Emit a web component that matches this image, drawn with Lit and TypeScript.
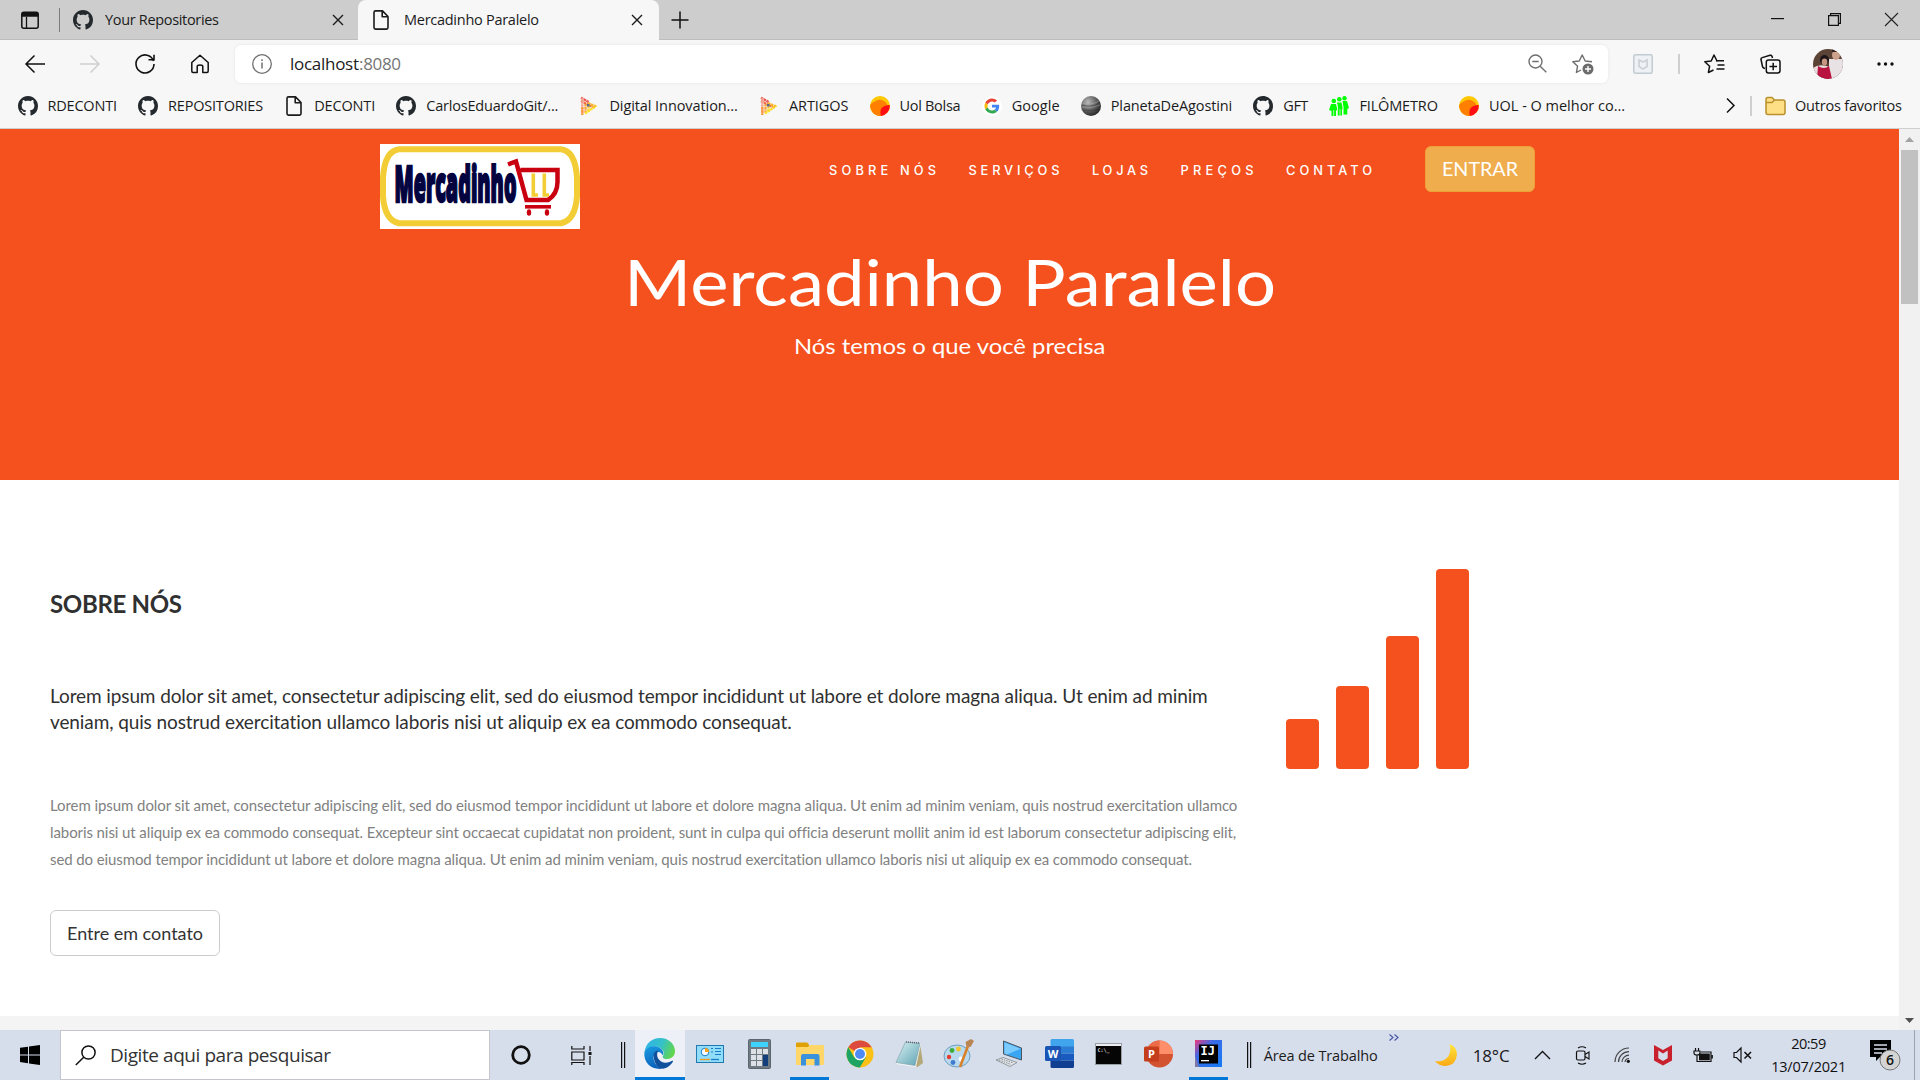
import { LitElement, html, css, svg } from "lit";
import { customElement } from "lit/decorators.js";
import { styleMap } from "lit/directives/style-map.js";

const UI = '"Open Sans"';
const BODY = "Lato";
const ctx = document.createElement("canvas").getContext("2d")!;

/** Text set to an exact run width by tracking it from its measured advance. */
const fit = (text: string, width: number, size: number, family = UI, weight = 400) => {
  ctx.font = `${weight} ${size}px ${family}`;
  const ls = (width - ctx.measureText(text).width) / (text.length - 1);
  return html`<span class="fit" style=${styleMap({
    width: `${width}px`, letterSpacing: `${ls.toFixed(3)}px`, fontSize: `${size}px`, fontFamily: `${family}, sans-serif`, fontWeight: `${weight}`,
  })}>${text}</span>`;
};

/** Text widened horizontally to a run width. */
const stretch = (text: string, width: number, size: number, family = BODY, weight = 400) => {
  ctx.font = `${weight} ${size}px ${family}`;
  const k = width / ctx.measureText(text).width;
  return html`<span class="stretch" style=${styleMap({ width: `${width}px`, fontSize: `${size}px`, fontFamily: `${family}, sans-serif`, fontWeight: `${weight}` })}
    ><span class="stretch-in" style=${styleMap({ transform: `scaleX(${k.toFixed(4)})` })}>${text}</span></span>`;
};

const icon = (w: number, h: number, body: unknown, box = `0 0 ${w} ${h}`) =>
  html`<svg class="ic" width=${w} height=${h} viewBox=${box} preserveAspectRatio="none" fill="none">${body}</svg>`;

const github = icon(20, 20, svg`<path fill="#24292e" d="M8 0C3.58 0 0 3.58 0 8c0 3.54 2.29 6.53 5.47 7.59.4.07.55-.17.55-.38 0-.19-.01-.82-.01-1.49-2.01.37-2.53-.49-2.69-.94-.09-.23-.48-.94-.82-1.13-.28-.15-.68-.52-.01-.53.63-.01 1.08.58 1.23.82.72 1.21 1.87.87 2.33.66.07-.52.28-.87.51-1.07-1.78-.2-3.64-.89-3.64-3.95 0-.87.31-1.59.82-2.15-.08-.2-.36-1.02.08-2.12 0 0 .67-.21 2.2.82.64-.18 1.32-.27 2-.27s1.36.09 2 .27c1.53-1.04 2.2-.82 2.2-.82.44 1.1.16 1.92.08 2.12.51.56.82 1.27.82 2.15 0 3.07-1.87 3.75-3.65 3.95.29.25.54.73.54 1.48 0 1.07-.01 1.93-.01 2.2 0 .21.15.46.55.38A8.01 8.01 0 0 0 16 8c0-4.42-3.58-8-8-8z"/>`, "0 0 16 16");
const page = icon(20, 20, svg`<path stroke="#1b1b1b" stroke-width="1.6" stroke-linejoin="round" d="M4.5 .9H11.5L17 6.500V17.500Q17 19.100 15.500 19.100H4.500Q3 19.100 3 17.500V2.400Q3 .9 4.500 .9ZM11.200 1V6.800H17"/>`);
const dio = icon(20, 20, svg`
  <g stroke-width="2.300" stroke-dasharray="2.600 .5">
    <path stroke="#f0524f" d="M2 1.700L10 6.200"/><path stroke="#ef7048" d="M2 5L15.500 12"/>
    <path stroke="#f2a08c" d="M3.300 2V18"/><path stroke="#fb9a3c" d="M3.300 11V19"/>
    <path stroke="#f6a13a" d="M6.500 8V17"/><path stroke="#f9c62c" d="M9.500 10V16"/>
    <path stroke="#fde02d" d="M6 17.500L17.500 9.500"/><path stroke="#f9b52c" d="M9 7L16.500 10.500"/>
  </g><rect x="8" y="8" width="2.500" height="2.500" fill="#5a6b8c"/>`);
const uol = icon(20, 20, svg`<circle cx="10" cy="10" r="10" fill="#ffc800"/><path fill="#ff8000" d="M2 15.500A8 8 0 1 1 17.500 9L12 19.800A10 10 0 0 1 2 15.500Z"/><path fill="#ff8000" d="M0 10Q1 6 6 5.500L8 18Q1 17 0 10Z"/><path fill="#ff0f14" d="M19.800 9A10 10 0 0 1 11 19.900Q9 13 13.500 10.500Q17 8.500 19.800 9Z"/>`);
const google = icon(20, 20, svg`<circle cx="24" cy="24" r="24" fill="#fff"/><g transform="translate(6 6) scale(.75)">
  <path fill="#EA4335" d="M24 9.500c3.540 0 6.710 1.220 9.210 3.600l6.850-6.850C35.900 2.380 30.470 0 24 0 14.620 0 6.510 5.380 2.560 13.220l7.980 6.190C12.430 13.720 17.740 9.500 24 9.500z"/>
  <path fill="#4285F4" d="M46.980 24.550c0-1.570-.15-3.090-.38-4.550H24v9.020h12.940c-.58 2.960-2.260 5.480-4.780 7.180l7.730 6c4.510-4.180 7.090-10.360 7.090-17.650z"/>
  <path fill="#FBBC05" d="M10.530 28.590c-.48-1.450-.76-2.990-.76-4.590s.27-3.140.76-4.590l-7.980-6.190C.92 16.460 0 20.120 0 24c0 3.880.92 7.540 2.560 10.780l7.970-6.190z"/>
  <path fill="#34A853" d="M24 48c6.480 0 11.930-2.130 15.890-5.810l-7.730-6c-2.150 1.450-4.920 2.300-8.160 2.300-6.260 0-11.570-4.220-13.470-9.910l-7.980 6.190C6.510 42.620 14.620 48 24 48z"/></g>`, "0 0 48 48");
const planet = icon(20, 20, svg`<defs><radialGradient id="pl" cx=".35" cy=".3" r=".8"><stop offset="0" stop-color="#b9b9b9"/><stop offset=".45" stop-color="#6c6c6c"/><stop offset="1" stop-color="#1a1a1a"/></radialGradient></defs>
  <circle cx="10" cy="10" r="10" fill="url(#pl)"/><path stroke="#c4c4c4" stroke-opacity=".35" d="M1.500 7Q9 10 18 5M1 11Q10 13 19 9"/><path stroke="#222" stroke-opacity=".4" d="M1 9Q10 12 19 7M2 14Q10 16 18 13"/>`);
const people = icon(20, 20, svg`<g fill="#0f0"><circle cx="4.800" cy="5" r="2.300"/><circle cx="10.300" cy="3.200" r="2.300"/><circle cx="15.500" cy="2.200" r="2.200"/>
  <path d="M2 8H7L8.500 14L7 14.500V20H2.500V15L0 14Z"/><path d="M8 6.500H12.500L14 12L13 13V19.500H8.800V13Z"/><path d="M13.500 5H18L20 12L18.300 13V18.500H14.500V12Z"/></g><path stroke="#f7f7f7" stroke-width=".7" d="M4.700 14V20M11 13V19.500M8 8L8.800 14M13.200 6.500L14 12"/>`);
const folder = icon(21, 20, svg`<path fill="#ffdf85" stroke="#b8902c" stroke-width="1.500" d="M1 3.500Q1 1.500 3 1.500H7L9.500 4H18Q20 4 20 6V16.500Q20 18.500 18 18.500H3Q1 18.500 1 16.500Z"/><path stroke="#b8902c" stroke-width="1.500" d="M1 6.500H7L9.500 4"/>`);
const x12 = icon(12, 12, svg`<path stroke="#1b1b1b" stroke-width="1.400" d="M1 1L11 11M11 1L1 11"/>`);

const bookmarks: [unknown, string, number][] = [
  [github, "RDECONTI", 69.5], [github, "REPOSITORIES", 95], [page, "DECONTI", 61], [github, "CarlosEduardoGit/...", 132],
  [dio, "Digital Innovation...", 128.5], [dio, "ARTIGOS", 59.5], [uol, "Uol Bolsa", 61], [google, "Google", 48],
  [planet, "PlanetaDeAgostini", 121.5], [github, "GFT", 25], [people, "FILÔMETRO", 78.5], [uol, "UOL - O melhor co...", 136],
];
const menu: [string, number][] = [["SOBRE NÓS", 107], ["SERVIÇOS", 91], ["LOJAS", 56], ["PREÇOS", 73], ["CONTATO", 86]];

const avatar = icon(30, 30, svg`<defs><clipPath id="av"><circle cx="15" cy="15" r="15"/></clipPath></defs><g clip-path="url(#av)">
  <rect width="30" height="30" fill="#5b4436"/><rect x="16" y="10" width="14" height="20" fill="#e9e2e4"/><ellipse cx="23" cy="6" rx="4" ry="5" fill="#cda28c"/><path fill="#31221f" d="M19 0H28V3H19Z"/>
  <path fill="#e8dcdc" d="M0 19Q6 14 17 18L18 26H0Z"/><path fill="#b9133f" d="M5 17Q11 21 16 17L19 30H4Z"/><ellipse cx="11.500" cy="11" rx="4.500" ry="5" fill="#1c1416"/><ellipse cx="11.500" cy="13" rx="2.800" ry="3.400" fill="#c79683"/></g>`);

const apps: [unknown, string][] = [
  [icon(31, 31, svg`<defs><linearGradient id="e1" x1="0" x2="1" y1=".2" y2=".5"><stop offset="0" stop-color="#2fb4e8"/><stop offset=".55" stop-color="#35c1c8"/><stop offset="1" stop-color="#62d64c"/></linearGradient><linearGradient id="e2" x1="0" x2=".3" y1="0" y2="1"><stop offset="0" stop-color="#1b9de2"/><stop offset="1" stop-color="#0a63bd"/></linearGradient></defs>
    <path fill="url(#e1)" d="M.5 14C1.500 5.500 8 0 16 0C25 0 31 6.500 31 13C31 18.500 27 21 22.500 21C19.500 21 18 19.500 19 18C21.500 14 17.500 8.500 11 8.500C6 8.500 2 11 .5 14Z"/>
    <path fill="url(#e2)" d="M.4 14C2.500 9.500 7 7.800 11.500 8.300C17 9 20.500 13.500 19 17.500C16 12 10 13.500 9.500 19C9.300 25 14 30 19 30.600C8 32.500-.8 25 .4 14Z"/>
    <path fill="#104f9c" d="M9.600 18C9.300 15 12 12.500 14.500 12.600C11 17 14.500 24.500 21 24.700C24.500 24.800 27 23.500 28.300 22.800C29 22.500 29.300 23 29 23.600C26.500 28 22 31 18 30.600C13 30 9.800 24 9.600 18Z"/>`), "active run"],
  [icon(28, 18, svg`<rect x=".5" y=".5" width="27" height="17" fill="#8fdcfb" stroke="#2378b0"/><circle cx="9" cy="7" r="3.800" fill="#f7fbff" stroke="#1b7cc5"/><path fill="#f6a21b" d="M9 3V7H13A4 4 0 0 0 9 3Z"/><path stroke="#1b7cc5" stroke-width="1.200" d="M15 3.500H17M19 3.500H25M19 6.500H25M19 9.500H25M15 7H17"/><path stroke="#f39a16" stroke-width="1.300" d="M4 14.500H14"/><path stroke="#1b7cc5" stroke-width="1.300" d="M15 14.500H23"/>`), ""],
  [icon(23, 30, svg`<rect x=".5" y=".5" width="22" height="29" rx="1" fill="#6f7a83" stroke="#5c666f"/><rect x="3" y="3" width="17" height="5" fill="#3fd3fb"/><g fill="#dde0e4"><path d="M3 10h5v5H3zM9 10h5v5H9zM15 10h5v5H15zM3 16h5v5H3zM9 16h5v5H9zM3 22h5v5H3zM9 22h5v5H9z"/></g><rect x="15" y="16" width="5" height="11" fill="#123f7c"/>`), ""],
  [icon(28, 24, svg`<path fill="#e0a106" d="M0 1.500Q0 .5 1 .5H11L13 2.500V6H0Z"/><path fill="#ffd769" d="M0 5H12L14 3H27Q28 3 28 4V22Q28 23 27 23H0Z"/><path fill="#3a92dc" d="M5 14Q5 12 7 12H21.500Q23.500 12 23.500 14V23.500H18.500V17H10V23.500H5Z"/>`), "run"],
  [icon(28, 28, svg`<circle cx="14" cy="14" r="13.500" fill="#fbc116"/><path fill="#dd4b3e" d="M14 14L2.300 7.200A13.500 13.500 0 0 1 25.700 7.300H14Z"/><path fill="#1da462" d="M2.300 7.200A13.500 13.500 0 0 0 13.800 27.500L19.800 17.500L14 14L8.200 17.400Z"/><circle cx="14" cy="14" r="6.300" fill="#fff"/><circle cx="14" cy="14" r="5" fill="#4c8bf5"/>`), ""],
  [icon(28, 26, svg`<defs><linearGradient id="np" x1="0" x2="1" y1="0" y2="1"><stop offset="0" stop-color="#d8f1f3"/><stop offset="1" stop-color="#5fa3b3"/></linearGradient></defs><path fill="#b5a878" d="M25 3L28 22L22.500 26L19 25Z"/><path fill="#f4f7f8" d="M1 23L11 1L26 2.500L21 26Z"/><path fill="url(#np)" stroke="#7c9ba3" stroke-width=".6" d="M1 21.500L10.500 1L25 2.500L20 24.500Z"/><path stroke="#5b6b70" stroke-width="1.500" stroke-dasharray="1 1" d="M11 1L25 2"/>`), ""],
  [icon(30, 29, svg`<ellipse cx="13" cy="17" rx="13" ry="11" fill="#b9d9ee" stroke="#6d9fbe"/><circle cx="5" cy="18" r="2.200" fill="#e33b2e"/><circle cx="8" cy="11.500" r="2.400" fill="#3cad3c"/><circle cx="14.500" cy="10" r="2.400" fill="#f6c42c"/><circle cx="9" cy="23.500" r="2.400" fill="#3f7bd0"/><circle cx="17" cy="20" r="2.400" fill="#fff"/><path stroke="#d9812a" stroke-width="2.600" d="M24 7L16 28"/><path fill="#b98552" d="M21.500 3L27 0L30 2L26.500 8L22.500 7.500Z"/>`), ""],
  [icon(28, 27, svg`<path fill="#3ba7f3" stroke="#4b5560" d="M8.500 1L26.500 8L26.500 20L8.500 14Z"/><path fill="#7ccbff" d="M9.500 2.500L25.500 8.800L12 14.500L9.500 13.500Z"/><path fill="#e5e8ea" stroke="#7d868e" stroke-width=".8" d="M1 20L8 17.500L22 22.500L15 26.500Z"/><path stroke="#7d868e" stroke-dasharray="1.500 1" d="M4 20L16 24.500M6.500 19L18.500 23"/>`), ""],
  [icon(29, 29, svg`<path fill="#41a5ee" d="M7 0H27.500Q29 0 29 1.500V8H5.500V1.500Q5.500 0 7 0Z"/><path fill="#2b7cd3" d="M5.500 7.500H29V14.500H5.500Z"/><path fill="#185abd" d="M5.500 14.500H29V21.500H5.500Z"/><path fill="#103f91" d="M5.500 21.500H29V27.500Q29 29 27.500 29H7Q5.500 29 5.500 27.500Z"/><rect y="7" width="16" height="15" rx="1.500" fill="#1a55b5"/><text x="8" y="18.500" text-anchor="middle" class="glyph" fill="#fff">W</text>`), ""],
  [icon(27, 22, svg`<rect x=".5" y=".5" width="26" height="21" fill="#050505" stroke="#9aa0a6"/><rect x="1" y="1" width="25" height="2" fill="#eceff1"/><text x="2.500" y="9" class="prompt" fill="#ddd">C:\\_</text>`), ""],
  [icon(29, 28, svg`<circle cx="15.500" cy="14" r="13.500" fill="#d35230"/><path fill="#ed6c47" d="M15.500 .5V14H2A13.500 13.500 0 0 1 15.500 .5Z"/><path fill="#ff8f6b" d="M15.500 .5A13.500 13.500 0 0 1 29 14H15.500Z"/><rect y="6.500" width="15" height="15" rx="1.500" fill="#c43e1c"/><text x="7.500" y="18" text-anchor="middle" class="glyph" fill="#fff">P</text>`), ""],
  [icon(27, 27, svg`<defs><linearGradient id="ij" x1="0" y1="0" x2="1" y2="1"><stop offset="0" stop-color="#f03878"/><stop offset=".35" stop-color="#3d6be8"/><stop offset="1" stop-color="#147bf5"/></linearGradient></defs><rect width="27" height="27" fill="url(#ij)"/><path fill="#fe8b2c" d="M0 16L4 27H0Z" opacity=".35"/><rect x="4" y="4.500" width="19" height="19" fill="#000"/><text x="5.500" y="15" class="ij" fill="#fff">IJ</text><rect x="6" y="20" width="8" height="1.300" fill="#fff"/>`), "run"],
];

const tray = [
  icon(17, 10, svg`<path stroke="#111" stroke-width="1.300" d="M1 9L8.500 1.500L16 9"/>`),
  icon(16, 19, svg`<path stroke="#111" stroke-width="1.200" d="M3 2Q7 -.5 11 2M3 17Q7 19.500 11 17"/><rect x="1.500" y="5" width="8.500" height="9" rx="1.500" stroke="#111" stroke-width="1.200"/><path stroke="#111" stroke-width="1.100" d="M10 8.500L14 6V13L10 10.500"/>`),
  icon(17, 16, svg`<g stroke="#444" stroke-width="1.200"><path d="M1 15A14 14 0 0 1 15 1"/><path d="M4.500 15A10.500 10.500 0 0 1 15 4.600"/><path d="M8 15A7 7 0 0 1 15 8.200"/><path d="M11 15A4 4 0 0 1 15 11.500"/></g><circle cx="14.300" cy="14.300" r="1.600" fill="#111"/>`),
  icon(20, 21, svg`<path fill="#c8202d" d="M1 0L10 5L19 0V15.500L10 20.500L1 15.500ZM5.300 5.500V13.200L10 15.900L14.700 13.200V5.500L10 8.500Z" fill-rule="evenodd"/>`),
  icon(20, 15, svg`<path stroke="#111" stroke-width="1.200" d="M2.500 0V3M5.500 0V3M1 3H7V5Q7 7 4 7Q1 7 1 5ZM4 7V13.500H18V4H8M19.300 7V10.500"/><path fill="#111" d="M6 5.500H16.800V12.300H6Z"/>`),
  icon(20, 16, svg`<path stroke="#111" stroke-width="1.200" d="M1 5.500H3.500L8 1V15L3.500 10.500H1Z"/><path stroke="#111" stroke-width="1.500" d="M11.500 5L18 11.500M18 5L11.500 11.500"/>`),
];

@customElement("app-root")
export class AppRoot extends LitElement {
  static styles = css`
    :host { display: block; width: 1920px; height: 1080px; overflow: hidden; background: #fff; color: #1b1b1b; font-family: "Open Sans", sans-serif; }
    * { box-sizing: border-box; }
    .ic { display: block; flex: none; overflow: visible; }
    .fit { display: inline-block; flex: none; white-space: nowrap; }
    .stretch { display: inline-block; flex: none; white-space: nowrap; text-align: left; }
    .stretch-in { display: inline-block; transform-origin: 0 50%; }
    .row { display: flex; align-items: center; }
    .cell { display: flex; align-items: center; justify-content: center; flex: none; }
    .grow { flex: 1; }

    .tabs { height: 40px; background: #cdcdcd; display: flex; align-items: stretch; box-shadow: inset 0 -1px #bdbdbd; }
    .tab { display: flex; align-items: center; height: 40px; line-height: 20px; }
    .tab.first { width: 298px; padding: 0 14px 0 13px; gap: 12px; }
    .tab.on { width: 301px; padding: 0 16px 0 13px; gap: 13px; background: #f7f7f7; border-radius: 8px 8px 0 0; }
    .tabmenu { width: 59px; padding-left: 1px; }
    .vbar { width: 1px; height: 24px; background: #7c7c7c; align-self: center; }
    .wc { width: 57px; height: 38px; }
    .plus { width: 42px; }

    .tools { height: 46px; background: #f7f7f7; padding-top: 1px; }
    .tools .cell { width: 55px; height: 44px; }
    .tools .w-back { width: 62px; }
    .tools .w-shield { width: 70px; }
    .tools .w-fav { width: 72px; padding-right: 3px; }
    .tools .w-coll { width: 36px; }
    .tools .w-face { width: 80px; }
    .tools .w-dots { width: 34px; margin-right: 18px; }
    .address { width: 1373px; height: 38px; background: #fff; border-radius: 6px; box-shadow: 0 0 3px #e3e3e3; padding: 0 14px 0 17px; }
    .address .host { margin-left: 18px; line-height: 24px; }
    .address .zoom { margin-right: 25px; }
    .dim { color: #767676; }
    .marks { height: 43px; background: #f7f7f7; border-bottom: 1px solid #cfcfcf; padding: 0 18px 3px 17.500px; gap: 21.100px; line-height: 20px; }
    .mark { display: flex; align-items: center; gap: 10px; flex: none; }
    .mark .slot { width: 20px; display: flex; justify-content: center; }
    .others { gap: 9px; }
    .others .sep { margin: 0 4px 0 6px; }
    .sep { width: 2px; height: 20px; background: #cfcfcf; }

    .view { display: flex; height: 901px; }
    .site { width: 1899px; display: flex; flex-direction: column; }
    .hero { height: 351px; background: #f4511e; color: #fff; padding-top: 15px; display: flex; flex-direction: column; }
    .top { display: flex; align-items: flex-start; padding-left: 380px; height: 85px; }
    .menu { display: flex; margin-left: 249px; gap: 32.500px; padding-top: 15px; line-height: 24px; }
    .enter { margin-left: 53px; margin-top: 2px; width: 110px; height: 46px; background: #f0ad4e; border: 1px solid #eea236; border-radius: 6px; line-height: 44px; padding-bottom: 1px; }
    h1 { margin: 18px 0 0; font-weight: 400; font-size: 63px; line-height: 70px; text-align: center; }
    .tag { margin: 14px 0 0; text-align: center; line-height: 30px; }
    .about { flex: 1; display: flex; padding: 89px 50px 0; font-family: Lato, sans-serif; }
    .copy { width: 1236px; display: flex; flex-direction: column; align-items: flex-start; }
    h2 { margin: 11px 0 55px; line-height: 48px; height: 48px; color: #303030; }
    .lead { display: flex; flex-direction: column; line-height: 26px; color: #303030; }
    .small { display: flex; flex-direction: column; line-height: 27px; color: #818181; margin-top: 57px; }
    .contact { margin-top: 37px; width: 170px; height: 46px; border: 1px solid #ccc; border-radius: 6px; color: #333; line-height: 44px; }
    .strip { height: 14px; background: #f4f4f4; }
    .scroll { width: 21px; background: #f1f1f1; display: flex; flex-direction: column; align-items: center; padding: 8px 0 7px; }
    .thumb { width: 17px; height: 154px; background: #c1c1c1; margin-top: 8px; }

    .task { height: 50px; background: #d6ddeb; display: flex; align-items: stretch; }
    .start { width: 60px; }
    .search { width: 430px; background: #fff; border: 1px solid #c3c6cc; padding-left: 14px; gap: 14px; display: flex; align-items: center; color: #333; line-height: 28px; }
    .w60 { width: 60px; }
    .w24 { width: 24px; }
    .cortana { margin-left: 1px; }
    .app { width: 49.900px; flex: none; display: flex; flex-direction: column; align-items: center; }
    .app .pic { flex: 1; display: flex; align-items: center; }
    .line { width: 39px; height: 3px; }
    .run .line { background: #0078d7; }
    .active { background: #edf0f7; }
    .active .line { width: 100%; }
    .bars { width: 30px; }
    .more { width: 33px; align-items: flex-start; padding-top: 4px; }
    .moon { width: 62px; padding-left: 8px; }
    .temp { width: 50px; justify-content: flex-start; }
    .t40 { width: 40px; }
    .clock { width: 92px; display: flex; flex-direction: column; align-items: center; justify-content: center; line-height: 23px; color: #111; flex: none; }
    .note { width: 60px; justify-content: flex-start; padding-left: 15px; border-right: 1px solid #9ba3b3; }
    .glyph { font: 700 11px "Open Sans", sans-serif; }
    .prompt { font: 700 5px "DejaVu Sans Mono", monospace; }
    .ij { font: 700 12px "DejaVu Sans Mono", monospace; }
    .brand { font: 800 50px "Open Sans", sans-serif; }
    .count { font: 600 14px "Open Sans", sans-serif; }
  `;

  private browser() {
    return html`
      <div class="tabs">
        <div class="tabmenu cell">${icon(18, 18, svg`<rect x=".8" y="1.200" width="16.400" height="16" rx="2" stroke="#111" stroke-width="1.500"/><path fill="#111" d="M.8 5.800V3Q.8 1 3 1H15Q17.200 1 17.200 3V5.800Z"/><path stroke="#111" stroke-width="1.300" d="M5.500 6V17"/>`)}</div>
        <div class="vbar"></div>
        <div class="tab first">${github}${fit("Your Repositories", 114, 14.5)}<div class="grow"></div>${x12}</div>
        <div class="tab on">${page}${fit("Mercadinho Paralelo", 135, 14.5)}<div class="grow"></div>${x12}</div>
        <div class="plus cell">${icon(18, 18, svg`<path stroke="#111" stroke-width="1.500" d="M9 .5V17.500M.5 9H17.500"/>`)}</div>
        <div class="grow"></div>
        <div class="wc cell">${icon(13, 2, svg`<path fill="#111" d="M0 0h13v1.200H0z"/>`)}</div>
        <div class="wc cell">${icon(13, 13, svg`<path stroke="#111" stroke-width="1.200" d="M.6 2.600H10.400V12.400H.6ZM2.600 2.600V.6H12.400V10.400H10.400"/>`)}</div>
        <div class="wc cell">${icon(13, 13, svg`<path stroke="#222" stroke-width="1.100" d="M0 0L13 13M13 0L0 13"/>`)}</div>
      </div>
      <div class="tools row">
        <div class="cell w-back">${icon(20, 18, svg`<path stroke="#111" stroke-width="1.500" d="M20 9H1M9.500 .5L1 9L9.500 17.500"/>`, "-4 0 20 18")}</div>
        <div class="cell">${icon(20, 18, svg`<path stroke="#cfcfcf" stroke-width="1.500" d="M0 9H19M10.500 .5L19 9L10.500 17.500"/>`)}</div>
        <div class="cell">${icon(20, 20, svg`<path stroke="#111" stroke-width="1.600" d="M18.500 7A9 9 0 1 0 19 10M19 .8V5.700H13.500"/>`)}</div>
        <div class="cell">${icon(20, 20, svg`<path stroke="#111" stroke-width="1.500" stroke-linejoin="round" d="M1.800 8.500L10 1.200L18.200 8.500V17Q18.200 18.500 17 18.500H12.800V12.500Q12.800 11 10 11Q7.200 11 7.200 12.500V18.500H3Q1.800 18.500 1.800 17Z"/>`)}</div>
        <div class="grow"></div>
        <div class="address row">
          ${icon(20, 20, svg`<circle cx="10" cy="10" r="9.300" stroke="#6f6f6f" stroke-width="1.300"/><path stroke="#6f6f6f" stroke-width="1.500" d="M10 8.500V14.500M10 5.200V6.900"/>`)}
          <span class="host row">${fit("localhost", 69, 17)}<span class="dim">${fit(":8080", 42, 17)}</span></span>
          <div class="grow"></div>
          <span class="zoom">${icon(19, 19, svg`<g stroke="#6f6f6f" stroke-width="1.400"><circle cx="7.500" cy="7.500" r="6.500"/><path d="M4.300 7.500H10.700M12.200 12.200L18.300 18.300"/></g>`)}</span>
          ${icon(22, 20, svg`<path stroke="#6f6f6f" stroke-width="1.400" stroke-linejoin="round" d="M20 7.700L13.200 7L10.200 1L7.200 7L.8 7.700L5.600 12.200L4.400 18.500L9 16"/><circle cx="16" cy="15" r="5.500" fill="#6b6b6b"/><path stroke="#fff" stroke-width="1.400" d="M16 12V18M13 15H19"/>`)}
        </div>
        <div class="cell w-shield">${icon(20, 20, svg`<rect x=".8" y=".8" width="18.400" height="18.400" rx="1.500" fill="#eff2f4" stroke="#c2cbd1" stroke-width="1.500"/><path stroke="#cdd2d6" stroke-width="1.800" d="M6 6L10 8L14 6V12.500L10 15L6 12.500Z"/>`)}</div>
        <div class="sep"></div>
        <div class="cell w-fav">${icon(21, 20, svg`<path stroke="#111" stroke-width="1.500" stroke-linejoin="round" d="M12.500 7H13L10 1L7.200 7L.8 7.700L5.600 12.200L4.400 18.500L9.500 16M12 6.800H20M13.500 11H20.500M12.500 15H20.500"/>`)}</div>
        <div class="cell w-coll">${icon(21, 20, svg`<path stroke="#111" stroke-width="1.500" stroke-linejoin="round" d="M5 14.500L3.800 14Q2.800 13.500 2.500 12.500L1 5.500Q.8 4 2.200 3.600L10 1.200Q11.500 1 12 2.200L12.500 4M8.500 6H17.500Q20 6 20 8.200V16.800Q20 19 17.500 19H8.500Q6.300 19 6.300 16.800V8.200Q6.300 6 8.500 6ZM13.200 8.800V16.200M9.500 12.500H17"/>`)}</div>
        <div class="cell w-face">${avatar}</div>
        <div class="cell w-dots">${icon(17, 4, svg`<g fill="#111"><circle cx="2" cy="2" r="1.700"/><circle cx="8.500" cy="2" r="1.700"/><circle cx="15" cy="2" r="1.700"/></g>`)}</div>
      </div>
      <div class="marks row">
        ${bookmarks.map(([i, t, w]) => html`<div class="mark"><span class="slot">${i}</span>${fit(t, w, 14.5)}</div>`)}
        <div class="grow"></div>
        <div class="others row">
          ${icon(9, 15, svg`<path stroke="#111" stroke-width="1.500" d="M1 .5L8 7.500L1 14.500"/>`)}
          <div class="sep"></div>
          ${folder}${fit("Outros favoritos", 107, 14.5)}
        </div>
      </div>`;
  }

  private logo() {
    return icon(200, 85, svg`
      <rect width="200" height="85" fill="#fff"/>
      <path stroke="#f3cd35" stroke-width="6" d="M19 5.200H181Q195.500 7 197 34V52Q195.500 76 181 79.300H19Q4.500 76 3 52V34Q4.500 7 19 5.200Z"/>
      <text x="14.500" y="57.500" class="brand" fill="#03033f" stroke="#03033f" stroke-width="2.600" textLength="122" lengthAdjust="spacingAndGlyphs">Mercadinho</text>
      <path stroke="#c9000f" stroke-width="4.500" d="M128 20.500L136 17.500L146.500 56H168Q177.500 50 177.500 38V26H140.500"/>
      <path stroke="#c9000f" stroke-width="3.600" d="M145 62.800H171"/>
      <ellipse cx="149" cy="68.500" rx="2.200" ry="3.200" fill="#c9000f"/><ellipse cx="167" cy="68.500" rx="2.200" ry="3.200" fill="#c9000f"/>
      <path stroke="#f3cd35" stroke-width="3.600" d="M153.300 29.500V51H158M164.300 29.500V51H169"/>`);
  }

  private chart() {
    const bars = [[0, 150], [50, 117], [100, 67], [150, 0]];
    return icon(184, 200, bars.map(([x, y]) => svg`<rect x=${x} y=${y} width="33" height=${200 - y} rx="4" fill="#f4511e"/>`));
  }

  render() {
    return html`
      ${this.browser()}
      <div class="view">
        <div class="site">
          <section class="hero">
            <div class="top">
              ${this.logo()}
              <nav class="menu">${menu.map(([t, w]) => fit(t, w, 12.8, "Inter", 500))}</nav>
              <div class="enter cell">${stretch("ENTRAR", 76, 18.5)}</div>
            </div>
            <h1>${stretch("Mercadinho Paralelo", 652, 63)}</h1>
            <p class="tag">${stretch("Nós temos o que você precisa", 312, 20.8, BODY)}</p>
          </section>
          <section class="about">
            <div class="copy">
              <h2>${fit("SOBRE NÓS", 132, 24, BODY, 700)}</h2>
              <div class="lead">
                ${fit("Lorem ipsum dolor sit amet, consectetur adipiscing elit, sed do eiusmod tempor incididunt ut labore et dolore magna aliqua. Ut enim ad minim", 1159, 19, BODY)}
                ${fit("veniam, quis nostrud exercitation ullamco laboris nisi ut aliquip ex ea commodo consequat.", 742, 19, BODY)}
              </div>
              <div class="small">
                ${fit("Lorem ipsum dolor sit amet, consectetur adipiscing elit, sed do eiusmod tempor incididunt ut labore et dolore magna aliqua. Ut enim ad minim veniam, quis nostrud exercitation ullamco", 1189, 15, BODY)}
                ${fit("laboris nisi ut aliquip ex ea commodo consequat. Excepteur sint occaecat cupidatat non proident, sunt in culpa qui officia deserunt mollit anim id est laborum consectetur adipiscing elit,", 1186, 15, BODY)}
                ${fit("sed do eiusmod tempor incididunt ut labore et dolore magna aliqua. Ut enim ad minim veniam, quis nostrud exercitation ullamco laboris nisi ut aliquip ex ea commodo consequat.", 1143, 15, BODY)}
              </div>
              <div class="contact cell">${fit("Entre em contato", 136, 18, BODY)}</div>
            </div>
            ${this.chart()}
          </section>
          <div class="strip"></div>
        </div>
        <div class="scroll">
          ${icon(9, 5, svg`<path fill="#a3a3a3" d="M4.500 0L9 5H0Z"/>`)}
          <div class="thumb"></div><div class="grow"></div>
          ${icon(9, 5, svg`<path fill="#505050" d="M0 0H9L4.500 5Z"/>`)}
        </div>
      </div>
      <div class="task">
        <div class="start cell">${icon(20, 20, svg`<path fill="#000" d="M0 2.800L8 1.700V9.400H0ZM9 1.500L20 0V9.400H9ZM0 10.500H8V18.200L0 17.100ZM9 10.500H20V20L9 18.400Z"/>`)}</div>
        <div class="search">${icon(21, 21, svg`<circle cx="13.500" cy="7.500" r="6.600" stroke="#111" stroke-width="1.500"/><path stroke="#111" stroke-width="1.500" d="M8.700 12.200L.8 20"/>`)}${fit("Digite aqui para pesquisar", 221, 19)}</div>
        <div class="w60 cell cortana">${icon(20, 20, svg`<circle cx="10" cy="10" r="8.300" stroke="#111" stroke-width="2.800"/>`)}</div>
        <div class="w60 cell">${icon(21, 19, svg`<path stroke="#111" stroke-width="1.200" d="M.8 0V3H13V0M.8 6H13V14H.8ZM.8 19V16.500H13V19M19 0V5M19 10V19"/><rect x="17.500" y="6" width="3" height="3" fill="#111"/>`)}</div>
        <div class="w24 cell">${icon(4, 26, svg`<path fill="#111" d="M0 0h1.200v26H0zM3 0h1.200v26H3z"/>`)}</div>
        ${apps.map(([pic, c]) => html`<div class="app ${c}"><div class="pic">${pic}</div><div class="line"></div></div>`)}
        <div class="bars cell">${icon(4, 26, svg`<path fill="#111" d="M0 0h1.200v26H0zM3 0h1.200v26H3z"/>`)}</div>
        <div class="cell">${fit("Área de Trabalho", 114, 14.5)}</div>
        <div class="more cell">${icon(10, 7, svg`<path stroke="#4a5aa8" stroke-width="1.200" d="M.5 .5L4 3.500L.5 6.500M5.500 .5L9 3.500L5.500 6.500"/>`)}</div>
        <div class="moon cell">${icon(22, 22, svg`<defs><linearGradient id="mo" x1="0" x2="0" y1="0" y2="1"><stop offset="0" stop-color="#ffe63b"/><stop offset="1" stop-color="#fbaa16"/></linearGradient></defs><path fill="url(#mo)" d="M14.500 0Q22 3 22 10.500Q21 21 11 22Q3.500 22 0 17Q9 18.500 13.500 12Q16.500 6 14.500 0Z"/>`)}</div>
        <div class="cell temp">${fit("18°C", 37, 17)}</div>
        ${tray.map((i) => html`<div class="t40 cell">${i}</div>`)}
        <div class="clock">${fit("20:59", 35, 14.5)}${fit("13/07/2021", 75, 14.5)}</div>
        <div class="note cell">${icon(31, 30, svg`<path fill="#000" d="M0 0H21V17H10L6 21V17H0Z"/><path stroke="#d6ddeb" stroke-width="1.500" d="M4 5H17M4 9H17M4 13H12"/><circle cx="20" cy="20" r="10" fill="#d4d4d4" stroke="#777"/><text x="20" y="25" text-anchor="middle" class="count" fill="#111">6</text>`)}</div>
      </div>`;
  }
}
